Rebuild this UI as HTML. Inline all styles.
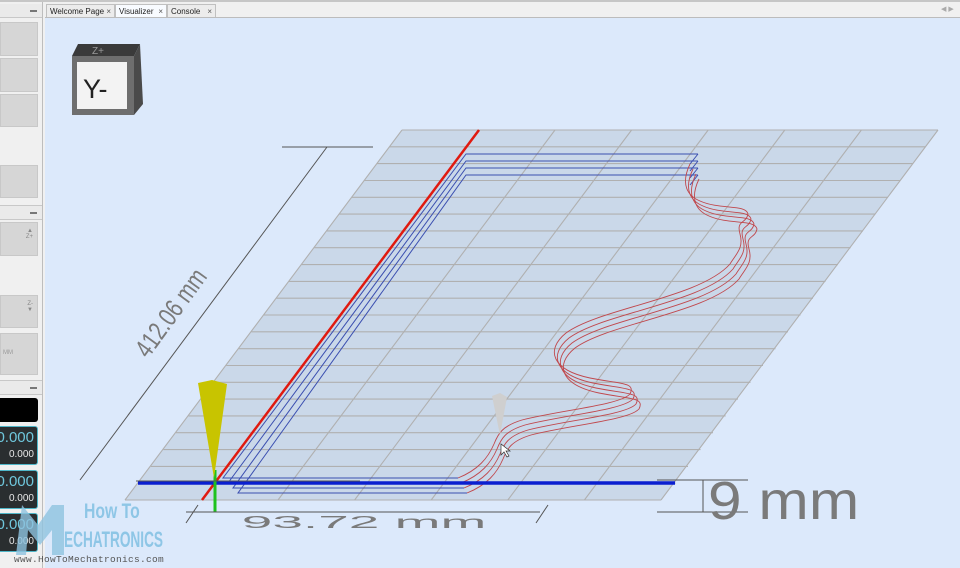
<!DOCTYPE html>
<html><head><meta charset="utf-8"><style>
html,body{margin:0;padding:0;width:960px;height:568px;overflow:hidden;background:#f0f0f0;font-family:"Liberation Sans",sans-serif}
.abs{position:absolute}
.box{position:absolute;left:0;width:38px;background:#d6d6d6;border:1px solid #c8c8c8;box-sizing:border-box}
.hdr{position:absolute;left:0;width:42px;height:13px;background:#eaeaea;border-top:1px solid #c8c8c8;border-bottom:1px solid #c8c8c8}
.hdr:after{content:"";position:absolute;right:5px;top:6px;width:7px;height:2px;background:#777}
.dro{position:absolute;left:0;width:38px;height:39px;background:#2a2e30;border:1px solid #4fb6c8;border-left:none;box-sizing:border-box;border-radius:0 3px 3px 0}
.dro .a{position:absolute;right:3px;top:2px;color:#6fc7dc;font-size:15px}
.dro .b{position:absolute;right:3px;top:22px;color:#e8e8e8;font-size:10px}
.tab{position:absolute;top:4px;height:13px;font-size:8px;line-height:13px;color:#222;border:1px solid #c0c0c0;border-bottom:none;background:#ececec;padding-left:3px;box-sizing:border-box}
.tab span{position:absolute;right:3px;top:0;color:#555}
</style></head><body>
<div class="abs" style="left:0;top:0;width:960px;height:2px;background:#c6c6c6"></div>
<div class="abs" style="left:45px;top:17px;width:915px;height:1px;background:#bcbcbc"></div>
<div class="tab" style="left:46px;width:69px">Welcome Page<span>×</span></div>
<div class="tab" style="left:115px;width:52px;background:#f8fbff">Visualizer<span>×</span></div>
<div class="tab" style="left:167px;width:49px">Console<span>×</span></div>
<div class="abs" style="left:941px;top:5px;font-size:7px;color:#aaa">◀ ▶</div>
<div class="abs" style="left:0;top:2px;width:42px;height:566px;background:#f0f0f0;border-right:1px solid #bdbdbd"></div>
<div class="hdr" style="top:4px;border-top:none"></div>
<div class="box" style="top:22px;height:34px"></div>
<div class="box" style="top:58px;height:34px"></div>
<div class="box" style="top:94px;height:33px"></div>
<div class="box" style="top:165px;height:33px"></div>
<div class="hdr" style="top:205px"></div>
<div class="box" style="top:222px;height:34px;font-size:6px;color:#888;text-align:right;padding:5px 4px 0 0">▲<br>Z+</div>
<div class="box" style="top:295px;height:33px;font-size:6px;color:#888;text-align:right;padding:5px 4px 0 0">Z-<br>▼</div>
<div class="box" style="top:333px;height:42px;font-size:6px;color:#999;padding:16px 0 0 2px">MM</div>
<div class="hdr" style="top:380px"></div>
<div class="abs" style="left:0;top:398px;width:38px;height:24px;background:#000;border-radius:0 3px 3px 0"></div>
<div class="dro" style="top:426px"><div class="a">0.000</div><div class="b">0.000</div></div>
<div class="dro" style="top:470px"><div class="a">0.000</div><div class="b">0.000</div></div>
<div class="dro" style="top:513px"><div class="a">0.000</div><div class="b">0.000</div></div>
<div class="abs" style="left:45px;top:18px;width:915px;height:550px;background:#dce9fb"></div>
<svg class="abs" style="left:0;top:0" width="960" height="568" viewBox="0 0 960 568">
<polygon points="402,130 938,130 661,500 125,500" fill="#cad8e9"/>
<g stroke="#b0b0b0" stroke-width="1.1" fill="none">
<path d="M402,130H938M389.5,146.8H925.5M377,163.6H913M364.4,180.5H900.5M351.9,197.3H888M339.3,214.1H875.5M326.8,230.9H863M314.2,247.7H850.6M301.6,264.6H838M289,281.4H825.5M276.5,298.2H813M264,315H800.5M251.4,331.8H788M238.8,348.7H775.5M226.2,365.5H763M213.7,382.3H750.5M201,399.1H738M188.6,415.9H725.6M176,432.7H713M163.4,449.6H700.5M150.8,466.4H688M138.3,483.2H675.5M125,500H661"/>
<path d="M402,130L125,500M555,130L278,500M631.6,130L354.6,500M708.2,130L431.2,500M784.8,130L507.8,500M861.4,130L584.4,500M938,130L661,500"/>
</g>
<g stroke="#3b4fb0" stroke-width="1" fill="none">
<path d="M698,154H466L223,478H458"/>
<path d="M698,161H466L228,483H461"/>
<path d="M698,168H466L233,488H464"/>
<path d="M698,175H466L238,493H467"/>
<path d="M698,154l-8,10M698,161l-8,10M698,168l-8,10M698,175l-8,10"/>
</g>
<g stroke="#c0484d" stroke-width="0.9" fill="none">
<path id="w" d="M690,164 C680,185 688,196 700,201 C720,210 746,204 748,214 C746,224 736,220 740,234 C744,248 736,254 730,264 C700,298 600,308 566,333 C545,350 552,370 590,378 C620,384 636,382 630,394 C620,405 562,410 522,420 C502,426 498,434 494,444 C488,458 478,470 458,478"/>
<use href="#w" transform="translate(3,5)"/>
<use href="#w" transform="translate(6,10)"/>
<use href="#w" transform="translate(9,15)"/>
</g>
<line x1="479" y1="130" x2="202" y2="500" stroke="#e01a10" stroke-width="2.5"/>
<line x1="138" y1="483" x2="675" y2="483" stroke="#0a1fd0" stroke-width="3.5"/>
<line x1="215" y1="470" x2="215" y2="512" stroke="#1ec21e" stroke-width="3"/>
<polygon points="198,383 212,380 227,384 214,478" fill="#c8c400"/>
<polygon points="492,396 500,393 507,397 500,435" fill="#cfcfcf"/>
<path d="M501,444 l0,11 l3,-3 l3,5 l2,-1 l-3,-5 l4,0 z" fill="#fff" stroke="#333" stroke-width="0.7"/>
<g stroke="#555" stroke-width="1" fill="none">
<path d="M282,147H373M327,147L80,480M136,481H360"/>
<path d="M186,512H540M198,505L186,523M548,505L536,523"/>
<path d="M657,480H748M657,512H748M703,480V512"/>
</g>
<text transform="translate(178,318) rotate(-54) scale(0.85,1.1)" text-anchor="middle" font-family="Liberation Sans" font-size="24" fill="#7a7a7a">412.06 mm</text>
<text transform="translate(364,528) scale(2.5,0.8)" text-anchor="middle" font-family="Liberation Sans" font-size="22" fill="#7a7a7a">93.72 mm</text>
<text transform="translate(708,519) scale(1.12,1)" font-family="Liberation Sans" font-size="54" fill="#7a7a7a">9 mm</text>
<polygon points="78,44 140,44 134,56 72,56" fill="#3a3a3a"/>
<polygon points="134,56 140,44 143,104 134,115" fill="#4a4a4a"/>
<rect x="72" y="56" width="62" height="59" fill="#6e6e6e"/>
<rect x="77" y="62" width="50" height="47" fill="#f3f3f3"/>
<text x="92" y="54" font-family="Liberation Sans" font-size="10" fill="#999">Z+</text>
<text x="83" y="98" font-family="Liberation Sans" font-size="27" fill="#222">Y-</text>
<path d="M16,555 L22,505 L38,525 L52,505 L64,505 L64,555 L52,555 L52,530 L40,545 L28,530 L26,555Z" fill="#8fc3e0" opacity="0.8"/>
</svg>
<div class="abs" style="left:84px;top:500px;font-size:21px;font-weight:bold;color:#8ec6e6;transform:scaleX(0.75);transform-origin:left">How To</div>
<div class="abs" style="left:64px;top:527px;font-size:22px;font-weight:bold;color:#8ec6e6;transform:scaleX(0.62);transform-origin:left">ECHATRONICS</div>
<div class="abs" style="left:14px;top:554px;font-family:'Liberation Mono',monospace;font-size:9.5px;color:#555;letter-spacing:0.3px">www.HowToMechatronics.com</div>
</body></html>
